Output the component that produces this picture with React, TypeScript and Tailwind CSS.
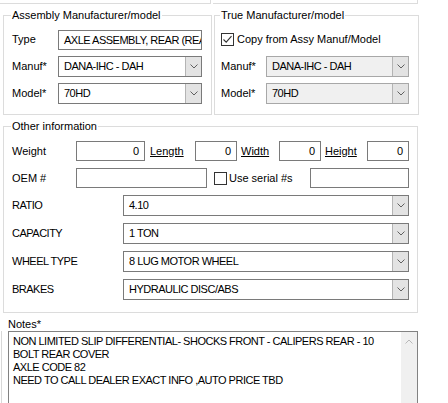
import type { ReactNode } from "react";

const font = { fontFamily: '"Liberation Sans", Arial, sans-serif' };

function Chevron({ color = "#606060" }: { color?: string }) {
  return (
    <svg width="8" height="5" viewBox="0 0 8 5" fill="none">
      <path d="M0.5 0.5 L4 4 L7.5 0.5" stroke={color} strokeWidth="1" />
    </svg>
  );
}

function Combo({ value, disabled = false, className = "" }: { value: string; disabled?: boolean; className?: string }) {
  return (
    <div
      className={`flex h-[21px] border ${disabled ? "border-[#a8a8a8] bg-[#f0f0f0]" : "border-[#7a7a7a] bg-white"} ${className}`}
    >
      <span className="flex-1 truncate pl-[5px] leading-[19px] tracking-[-0.5px] text-black">{value}</span>
      <span className="flex w-[16px] items-center justify-center border-l border-[#b4b4b4] bg-[#e3e3e3]">
        <Chevron />
      </span>
    </div>
  );
}

function TextBox({ value = "", right = false, className = "" }: { value?: string; right?: boolean; className?: string }) {
  return (
    <div
      className={`h-[20px] border border-[#7a7a7a] bg-white px-[5px] leading-[18px] ${right ? "text-right" : ""} ${className}`}
    >
      {value}
    </div>
  );
}

function CheckBox({ checked = false }: { checked?: boolean }) {
  return (
    <svg width="13" height="13" viewBox="0 0 13 13" className="shrink-0">
      <rect x="0.5" y="0.5" width="12" height="12" fill="white" stroke="#333" />
      {checked && <path d="M2.5 6.5 L5.2 9.2 L10.5 3.2" stroke="#333" strokeWidth="1.1" fill="none" />}
    </svg>
  );
}

function Group({ title, className = "", children }: { title: string; className?: string; children: ReactNode }) {
  return (
    <fieldset className={`border border-[#dcdcdc] ${className}`}>
      <legend className="-ml-[1px] px-[1px] leading-[14px]">{title}</legend>
      {children}
    </fieldset>
  );
}

function Row({ label, children, labelW = "w-[46px]" }: { label: string; children: ReactNode; labelW?: string }) {
  return (
    <div className="flex h-[21px] items-center">
      <span className={`${labelW} shrink-0`}>{label}</span>
      {children}
    </div>
  );
}

const dims = ["Length", "Width", "Height"];

const lookups = [
  { label: "RATIO", value: "4.10" },
  { label: "CAPACITY", value: "1 TON" },
  { label: "WHEEL TYPE", value: "8 LUG MOTOR WHEEL" },
  { label: "BRAKES", value: "HYDRAULIC DISC/ABS" },
];

const notes = [
  "NON LIMITED SLIP DIFFERENTIAL- SHOCKS FRONT - CALIPERS REAR - 10",
  "BOLT REAR COVER",
  "AXLE CODE 82",
  "NEED TO CALL DEALER EXACT INFO ,AUTO PRICE TBD",
];

export default function App() {
  return (
    <div className="h-[403px] w-[448px] overflow-hidden bg-white text-[11px] text-black" style={font}>
      {/* bottom edges of the panels above */}
      <div className="flex h-[4px]">
        <div className="w-[211px] border-b border-r border-[#dcdcdc]" />
        <div className="ml-[2px] w-[205px] border-b border-r border-[#dcdcdc]" />
      </div>

      <div className="mt-[4px] flex">
        <Group title="Assembly Manufacturer/model" className="ml-[3px] w-[209px] px-[8px] pb-[10px] pt-[7px]">
          <div className="flex flex-col gap-[6px]">
            <Row label="Type">
              <TextBox value="AXLE ASSEMBLY, REAR (REA" className="w-[144px] overflow-hidden whitespace-nowrap tracking-[-0.5px]" />
            </Row>
            <Row label="Manuf*">
              <Combo value="DANA-IHC - DAH" className="w-[144px]" />
            </Row>
            <Row label="Model*">
              <Combo value="70HD" className="w-[144px]" />
            </Row>
          </div>
        </Group>

        <Group title="True Manufacturer/model" className="ml-[2px] w-[205px] pl-[6px] pr-[9px] pb-[10px] pt-[7px]">
          <div className="flex flex-col gap-[6px]">
            <div className="flex h-[21px] items-center gap-[3px]">
              <CheckBox checked />
              <span>Copy from Assy Manuf/Model</span>
            </div>
            <Row label="Manuf*" labelW="w-[45px]">
              <Combo value="DANA-IHC - DAH" disabled className="flex-1" />
            </Row>
            <Row label="Model*" labelW="w-[45px]">
              <Combo value="70HD" disabled className="flex-1" />
            </Row>
          </div>
        </Group>
      </div>

      <Group title="Other information" className="ml-[3px] mt-[4px] w-[415px] px-[8px] pb-[12px] pt-[8px]">
        <div className="flex flex-col gap-[7px]">
          <div className="flex h-[20px] items-center">
            <span className="w-[64px] shrink-0">Weight</span>
            <TextBox value="0" right className="w-[69px]" />
            {dims.map((d, i) => (
              <div key={d} className="flex items-center">
                <span
                  className={`${i === 0 ? "ml-[5px] w-[45px]" : i === 1 ? "ml-[4px] w-[38px]" : "ml-[4px] w-[42px]"} underline underline-offset-[1px]`}
                >
                  {d}
                </span>
                <TextBox value="0" right className="w-[42px]" />
              </div>
            ))}
          </div>
          <div className="flex h-[20px] items-center">
            <span className="w-[64px] shrink-0">OEM #</span>
            <TextBox className="w-[131px]" />
            <span className="ml-[7px]">
              <CheckBox />
            </span>
            <span className="ml-[2px] w-[81px]">Use serial #s</span>
            <TextBox className="w-[99px]" />
          </div>
          {lookups.map((l) => (
            <div key={l.label} className="flex h-[21px] items-center">
              <span className="w-[111px] shrink-0 tracking-[-0.5px]">{l.label}</span>
              <Combo value={l.value} className="w-[286px]" />
            </div>
          ))}
        </div>
      </Group>

      <div className="flex">
        <div className="ml-[1px] mt-[18px] w-[1px] bg-[#d8d8d8]" />
        <div className="ml-[6px] flex w-[410px] flex-col">
          <span className="mt-[5px] leading-[13px]">Notes*</span>
          <div className="flex h-[80px] border border-[#828282] bg-white">
            <div className="flex-1 pl-[4px] pt-[3px] leading-[13px] tracking-[-0.5px]">
              {notes.map((n) => (
                <div key={n}>{n}</div>
              ))}
            </div>
            <div className="flex w-[16px] justify-center bg-[#f0f0f0] pt-[7px]">
              <svg width="8" height="5" viewBox="0 0 8 5" fill="none">
                <path d="M0.5 4.5 L4 1 L7.5 4.5" stroke="#b8b8b8" strokeWidth="1" />
              </svg>
            </div>
          </div>
        </div>
      </div>
    </div>
  );
}
